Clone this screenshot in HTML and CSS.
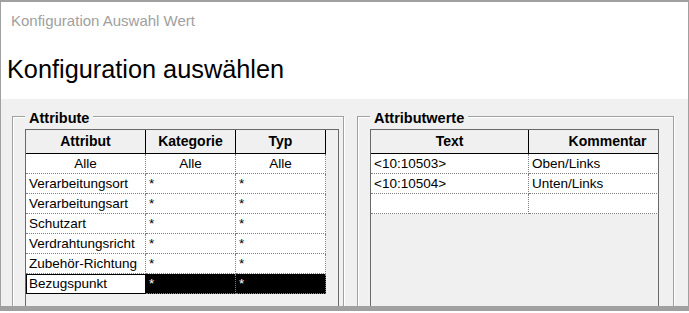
FILE: index.html
```html
<!DOCTYPE html>
<html lang="de">
<head>
    <meta charset="UTF-8">
    <title>Konfiguration Auswahl Wert</title>
    <link rel="stylesheet" href="styles.css">
</head>
<body>

    <div class="window">

        <!-- Header area -->
        <div class="titlebar">
            <div class="caption">Konfiguration Auswahl Wert</div>
            <h1 class="heading">Konfiguration auswählen</h1>
        </div>

        <!-- Two group boxes -->
        <div class="content">

            <fieldset class="group group-left">
                <legend>Attribute</legend>
                <div class="grid grid-left">
                    <table>
                        <colgroup>
                            <col class="col-attr">
                            <col class="col-kat">
                            <col class="col-typ">
                        </colgroup>
                        <thead>
                            <tr><th>Attribut</th><th>Kategorie</th><th>Typ</th></tr>
                        </thead>
                        <tbody>
                            <tr class="row-all"><td>Alle</td><td>Alle</td><td>Alle</td></tr>
                            <tr><td>Verarbeitungsort</td><td>*</td><td>*</td></tr>
                            <tr><td>Verarbeitungsart</td><td>*</td><td>*</td></tr>
                            <tr><td>Schutzart</td><td>*</td><td>*</td></tr>
                            <tr><td>Verdrahtungsricht</td><td>*</td><td>*</td></tr>
                            <tr><td>Zubehör-Richtung</td><td>*</td><td>*</td></tr>
                            <tr class="row-selected"><td class="cell-focus">Bezugspunkt</td><td>*</td><td>*</td></tr>
                        </tbody>
                    </table>
                </div>
            </fieldset>

            <fieldset class="group group-right">
                <legend>Attributwerte</legend>
                <div class="grid grid-right">
                    <table>
                        <colgroup>
                            <col class="col-text">
                            <col class="col-komm">
                        </colgroup>
                        <thead>
                            <tr><th>Text</th><th>Kommentar</th></tr>
                        </thead>
                        <tbody>
                            <tr><td>&lt;10:10503&gt;</td><td>Oben/Links</td></tr>
                            <tr><td>&lt;10:10504&gt;</td><td>Unten/Links</td></tr>
                            <tr><td>&nbsp;</td><td>&nbsp;</td></tr>
                        </tbody>
                    </table>
                </div>
            </fieldset>

        </div>
    </div>

</body>
</html>
```

FILE: styles.css
```css
/* Reset */
* {
    margin: 0;
    padding: 0;
    box-sizing: border-box;
    font-family: 'Liberation Sans', Arial, sans-serif;
}

body {
    background: #ffffff;
    width: 689px;
    height: 313px;
    overflow: hidden;
}

/* Window frame */
.window {
    width: 689px;
    height: 311px;
    border-top: 2px solid #a0a0a0;
    border-left: 1px solid #a0a0a0;
    border-right: 1px solid #a0a0a0;
    border-bottom: 5px solid #a0a0a0;
    display: flex;
    flex-direction: column;
    overflow: hidden;
}

/* White header */
.titlebar {
    height: 97px;
    background: #ffffff;
    padding: 9px 0 0 10px;
}

.caption {
    font-size: 15px;
    line-height: 20px;
    color: #a0a0a0;
}

.heading {
    margin: 23px 0 0 -4px;
    font-size: 25.3px;
    line-height: 30px;
    font-weight: normal;
    color: #000000;
}

/* Gray dialog body */
.content {
    flex: 1;
    background: #f0f0f0;
    display: flex;
    gap: 13px;
    padding: 7px 0 0 11px;
    overflow: hidden;
}

/* Etched group box */
.group {
    border: 1px solid #a0a0a0;
    box-shadow: inset 1px 1px 0 #ffffff, 1px 1px 0 #ffffff;
    padding: 3px 0 0 12px;
    height: 260px;
    min-width: 0;
    flex-shrink: 0;
}

.group-left {
    width: 332px;
}

.group-right {
    width: 317px;
}

.group legend {
    margin-left: 0;
    padding: 4px 4px 0;
    font-size: 14.5px;
    line-height: 16px;
    font-weight: bold;
    background: #f0f0f0;
    color: #000000;
}

/* Data grid */
.grid {
    border: 1px solid #696969;
    background: #f0f0f0;
    height: 240px;
    overflow: hidden;
}

.grid-left {
    width: 314px;
}

.grid-right {
    width: 289px;
}

.grid table {
    border-collapse: separate;
    border-spacing: 0;
    table-layout: fixed;
}

.grid-left table {
    width: 300px;
}

.grid-right table {
    width: 316px;
}

.col-attr { width: 120px; }
.col-kat { width: 90px; }
.col-typ { width: 90px; }
.col-text { width: 158px; }
.col-komm { width: 158px; }

.grid th {
    height: 24px;
    line-height: 23px;
    font-size: 14px;
    font-weight: bold;
    text-align: center;
    background: #f0f0f0;
    border-right: 1px solid #000000;
    border-bottom: 1px solid #000000;
    white-space: nowrap;
    overflow: hidden;
}

.grid td {
    height: 20px;
    line-height: 19px;
    font-size: 13.5px;
    padding: 0 3px;
    background: #ffffff;
    color: #000000;
    border-right: 1px dotted #808080;
    border-bottom: 1px dotted #808080;
    white-space: nowrap;
    overflow: hidden;
}

.row-all td {
    text-align: center;
}

/* Selected row */
.row-selected td {
    background: #000000;
    color: #ffffff;
}

.row-selected td.cell-focus {
    background: #ffffff;
    color: #000000;
    outline: 1px solid #000000;
    outline-offset: -1px;
}
```
